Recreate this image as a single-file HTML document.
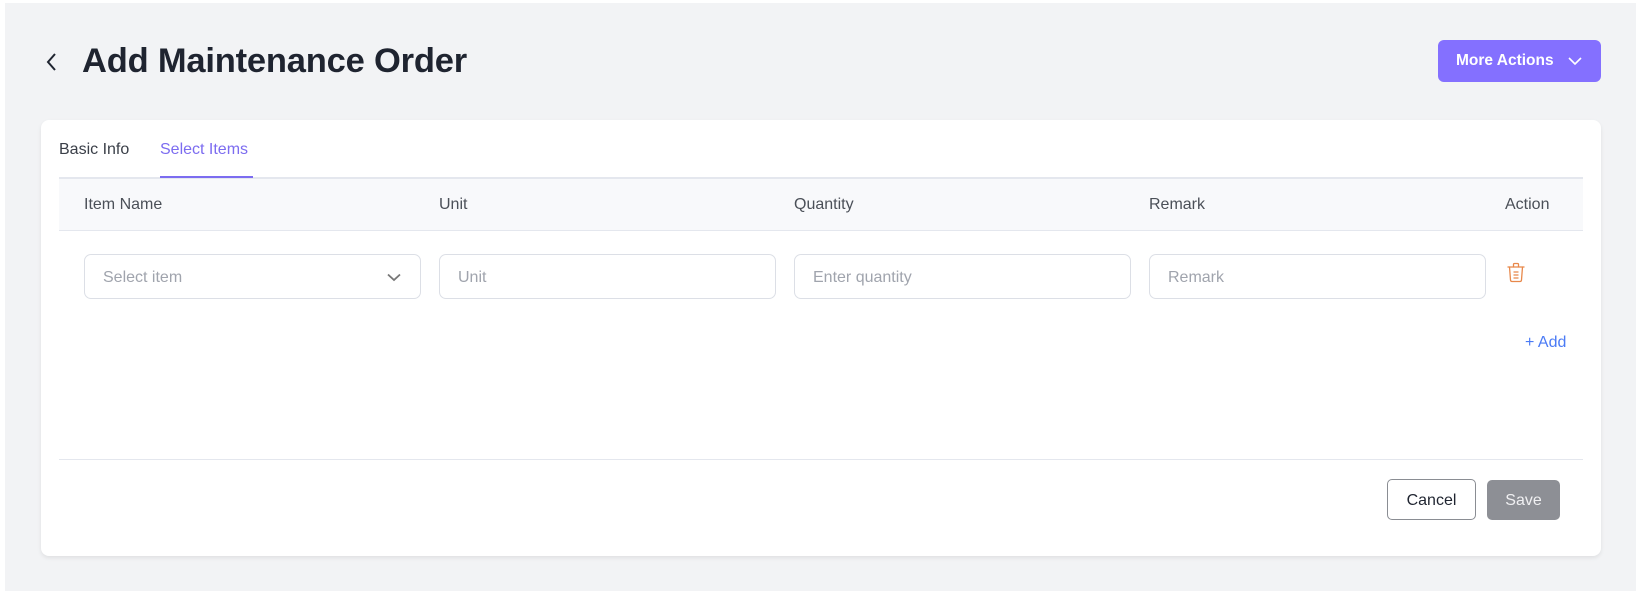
<!DOCTYPE html>
<html><head><meta charset="utf-8"><style>
*{box-sizing:border-box;margin:0;padding:0}
body{width:1636px;height:591px;background:#fff;font-family:"Liberation Sans",sans-serif;position:relative;overflow:hidden}
.bg{position:absolute;left:5px;top:3px;right:0;bottom:0;background:#f2f3f5}
.abs{position:absolute}
.title{left:82px;top:42px;font-size:34.5px;font-weight:bold;color:#1f2430;letter-spacing:-0.2px}
.btn{left:1438px;top:40px;width:163px;height:42px;background:#8470ff;border-radius:6px;color:#fff;font-size:15.5px;font-weight:bold;line-height:42px;padding-left:18px}
.card{left:41px;top:120px;width:1560px;height:436px;background:#fff;border-radius:8px;box-shadow:0 2px 4px rgba(0,0,0,.08)}
.tab{font-size:16px;top:141px}
.hdr{left:59px;top:177px;width:1524px;height:54px;background:#f8f9fb;border-top:2px solid #e4e7ee;border-bottom:1px solid #e4e7ee}
.h{top:196px;font-size:16px;color:#4b5058}
.inp{top:254px;height:45px;border:1px solid #dcdfe6;border-radius:7px;font-size:16px;color:#a0a4ad;line-height:45px;padding-left:18px}
</style></head><body>
<div class="bg"></div>
<svg class="abs" style="left:44px;top:50px" width="16" height="24" viewBox="0 0 16 24"><path d="M11 4 L4 12 L11 20" fill="none" stroke="#1f2430" stroke-width="2"/></svg>
<div class="abs title">Add Maintenance Order</div>
<div class="abs btn">More Actions<svg style="position:absolute;left:130px;top:16px" width="14" height="10" viewBox="0 0 14 10"><path d="M1 2 L7 8 L13 2" fill="none" stroke="#fff" stroke-width="1.6"/></svg></div>
<div class="abs card"></div>
<div class="abs tab" style="left:59px;color:#3a3f48">Basic Info</div>
<div class="abs tab" style="left:160px;color:#7c6cf0">Select Items</div>
<div class="abs hdr"></div>
<div class="abs" style="left:160px;top:176px;width:93px;height:2px;background:#7c6cf0"></div>
<div class="abs h" style="left:84px">Item Name</div>
<div class="abs h" style="left:439px">Unit</div>
<div class="abs h" style="left:794px">Quantity</div>
<div class="abs h" style="left:1149px">Remark</div>
<div class="abs h" style="left:1505px">Action</div>
<div class="abs inp" style="left:84px;width:337px">Select item<svg style="position:absolute;right:19px;top:18px" width="14" height="9" viewBox="0 0 14 9"><path d="M1 1.5 L7 7 L13 1.5" fill="none" stroke="#777" stroke-width="1.8"/></svg></div>
<div class="abs inp" style="left:439px;width:337px">Unit</div>
<div class="abs inp" style="left:794px;width:337px">Enter quantity</div>
<div class="abs inp" style="left:1149px;width:337px">Remark</div>
<svg class="abs" style="left:1507px;top:262px" width="18" height="21" viewBox="0 0 18 21"><g fill="none" stroke="#e8884a" stroke-width="1.3" stroke-linecap="round"><path d="M1 5 H17"/><path d="M6.5 5 V2.5 Q6.5 1.5 7.5 1.5 H10.5 Q11.5 1.5 11.5 2.5 V5"/><path d="M2.5 5 L3.5 18 Q3.6 19.5 5 19.5 H13 Q14.4 19.5 14.5 18 L15.5 5"/><path d="M7 10 H11 M7 13 H11 M7 16 H11"/></g></svg>
<div class="abs" style="left:1525px;top:334px;font-size:16px;color:#4b7bf5">+ Add</div>
<div class="abs" style="left:59px;top:459px;width:1524px;height:1px;background:#e4e7ee"></div>
<div class="abs" style="left:1387px;top:479px;width:89px;height:41px;border:1px solid #8a8d93;border-radius:5px;font-size:16px;color:#1f2430;text-align:center;line-height:41px">Cancel</div>
<div class="abs" style="left:1487px;top:480px;width:73px;height:40px;background:#8d8f95;border-radius:5px;font-size:16px;color:#f0f0f2;text-align:center;line-height:41px">Save</div>
</body></html>
